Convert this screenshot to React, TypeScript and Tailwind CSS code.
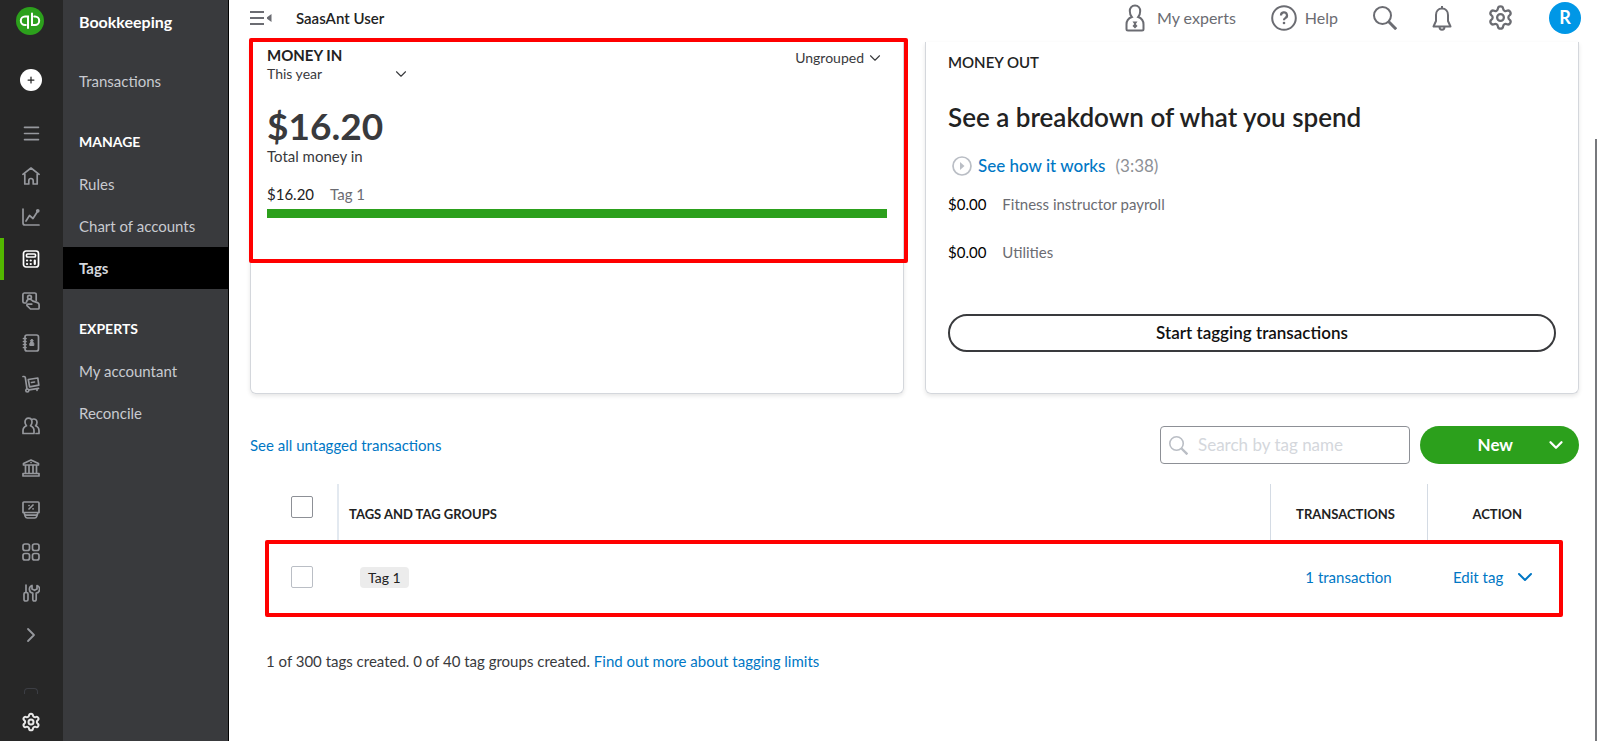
import type { ReactNode } from "react";
import { ChevronDown, ChevronRight, Menu, Plus, Settings } from "lucide-react";

function RailSvg({ children }: { children: ReactNode }) {
  return (
    <svg
      width="18"
      height="18"
      viewBox="0 0 18 18"
      fill="none"
      stroke="currentColor"
      strokeWidth="1.7"
      strokeLinecap="round"
      strokeLinejoin="round"
      aria-hidden="true"
    >
      {children}
    </svg>
  );
}

function SearchGlyph({ size }: { size: number }) {
  return (
    <svg width={size} height={size} viewBox="0 0 24 24" fill="none" stroke="currentColor" strokeWidth="2" className="shrink-0" aria-hidden="true">
      <circle cx="9.5" cy="9.5" r="8.5" />
      <path d="m15.5 15.5 7.7 7.7" strokeWidth="3" />
    </svg>
  );
}

const railItems: { label: string; active?: boolean; icon: ReactNode }[] = [
  { label: "Menu", icon: <Menu size={21} strokeWidth={1.8} /> },
  {
    label: "Home",
    icon: (
      <RailSvg>
        <path d="M.9 7.3 9 1l8.1 6.3M2.8 6v11h4v-3.3a2.2 2.2 0 0 1 4.4 0V17h4V6" />
      </RailSvg>
    ),
  },
  {
    label: "Reports",
    icon: (
      <RailSvg>
        <path d="M1 1v14a2 2 0 0 0 2 2h14M4 13l3.5-5.5 3.5 3 4.5-7" />
        <circle cx="15.8" cy="2.8" r="1" />
      </RailSvg>
    ),
  },
  {
    label: "Bookkeeping",
    active: true,
    icon: (
      <RailSvg>
        <rect x="1.5" y="1" width="15" height="16" rx="2.5" />
        <rect x="4.5" y="4" width="9" height="3" rx="1" />
        <path d="M5 10.5h.1M8.7 10.5h.1M5 14h.1M8.7 14h.1M12.8 10.5V14" strokeWidth="2.2" />
      </RailSvg>
    ),
  },
  {
    label: "Sales",
    icon: (
      <RailSvg>
        <path d="M4 11H2.3A1.5 1.5 0 0 1 .9 9.5v-7A1.5 1.5 0 0 1 2.3 1h10.4a1.5 1.5 0 0 1 1.5 1.5v5.8" />
        <circle cx="7.5" cy="5.3" r="1.9" />
        <path d="M4.5 10c.3-1.7 1.5-2.8 3-2.8 1.4 0 2.3.9 3.5 1.9l4.5 1.5q1.6.7 1.6 2.2v3.2q0 1-1 1H8.5L5 13.7q-.6-1.4 1-1.7l3.8.2" />
      </RailSvg>
    ),
  },
  {
    label: "Contacts",
    icon: (
      <RailSvg>
        <rect x="3" y="1" width="13.5" height="16" rx="2" />
        <path d="M1.5 4.5H4M1.5 7.5H4M1.5 10.5H4M1.5 13.5H4" />
        <path
          d="M9.8 5.5a1.2 1.2 0 0 1 .8 2.2l1.2 1.8v2h-4v-2L9 7.7a1.2 1.2 0 0 1 .8-2.2z"
          fill="currentColor"
          strokeWidth="1"
        />
      </RailSvg>
    ),
  },
  {
    label: "Commerce",
    icon: (
      <RailSvg>
        <path d="M1 1.5h1.2q.9 0 1.1 1L5 14M7 14.8l9.5-1.5" />
        <circle cx="5.3" cy="15.5" r="1.5" />
        <path d="m6.3 4.5 9.5-1.5 1 7.2-9.2 1.6zM9.5 7.500l3-.5M15 14.5v.8" />
      </RailSvg>
    ),
  },
  {
    label: "Customers",
    icon: (
      <RailSvg>
        <path d="M6.5 1.2c2.2 0 3.5 1.6 3.5 3.800 0 1.6-.6 2.8-1.5 3.8 2.3.9 3.5 2.3 3.5 5v2.7H1v-2.7c0-2.7 1.2-4.1 3.5-5C3.600 7.8 3 6.6 3 5c0-2.2 1.3-3.8 3.5-3.8z" />
        <path d="M10.5 2.2c2.8-.8 4.5.8 4.5 3.1 0 1.5-.5 2.6-1.4 3.5 2.2.8 3.4 2.2 3.4 5v2.7h-3" />
      </RailSvg>
    ),
  },
  {
    label: "Banking",
    icon: (
      <RailSvg>
        <path d="M1.500 6V4.5L9 1l7.5 3.5V6zM3.5 6v8M7 6v8M11 6v8M14.5 6v8M1 14.5h16V17H1zM9 3.5h.1" />
      </RailSvg>
    ),
  },
  {
    label: "Taxes",
    icon: (
      <RailSvg>
        <path d="M2 1h14q1 0 1 1v9.5H1V2q0-1 1-1zM2 11.5l1.3 4q.5 1.5 2 1.5h7.4q1.5 0 2-1.5l1.3-4M3.5 14.2h11" />
        <path d="m7 8 4-4M7 4.5h.1M11 7.8h.1" />
      </RailSvg>
    ),
  },
  {
    label: "Apps",
    icon: (
      <RailSvg>
        <rect x="1" y="1" width="6.5" height="6.5" rx="2" />
        <rect x="10.5" y="1" width="6.5" height="6.5" rx="2" />
        <rect x="1" y="10.5" width="6.5" height="6.5" rx="2" />
        <rect x="10.5" y="10.5" width="6.5" height="6.5" rx="2" />
      </RailSvg>
    ),
  },
  {
    label: "Tools",
    icon: (
      <RailSvg>
        <path d="M4 1v7.5" />
        <rect x="2" y="8.5" width="4" height="8.5" rx="1.5" />
        <path d="M10.8 9.2a4 4 0 0 1-.8-7.7V5l2.5 1.3L15 5V1.5a4 4 0 0 1-.8 7.7v6.1a1.7 1.7 0 0 1-3.4 0z" />
      </RailSvg>
    ),
  },
  { label: "More", icon: <ChevronRight size={24} strokeWidth={1.8} /> },
];

function IconRail() {
  return (
    <nav aria-label="Main" className="flex w-[63px] shrink-0 flex-col items-center bg-[#272727] pr-px text-[#96989d]">
      <a href="#home" aria-label="QuickBooks" className="mt-[7px] mr-[3px]">
        <svg width="28" height="28" viewBox="0 0 28 28" fill="none" stroke="#fff" strokeWidth="2" strokeLinecap="round">
          <circle cx="14" cy="14" r="14" fill="#2ca01c" stroke="none" />
          <path d="M12 21V9.5H9a4.200 4.200 0 0 0 0 8.4h.8M16 6.500V18h3a4.200 4.200 0 0 0 0-8.4h-.8" />
        </svg>
      </a>
      <button aria-label="Create" className="mt-[34px] flex size-[22px] items-center justify-center rounded-full bg-white text-[#272727]">
        <Plus size={10} strokeWidth={3} />
      </button>
      <ul className="mt-[22px] flex w-full flex-1 flex-col">
        {railItems.map((item) => (
          <li key={item.label} className="flex flex-1">
            <a
              href="#"
              aria-label={item.label}
              className={
                item.active
                  ? "flex flex-1 items-center justify-center border-l-4 border-[#53b700] pr-1 text-white"
                  : "flex flex-1 items-center justify-center"
              }
            >
              {item.icon}
            </a>
          </li>
        ))}
      </ul>
      <span className="mt-8 h-1.5 w-3.5 rounded-t border border-b-0 border-[#3c3e44]" />
      <button aria-label="Settings" className="mt-[18px] mb-[9px] text-[#e8e8e8]">
        <Settings size={20} strokeWidth={2.4} />
      </button>
    </nav>
  );
}

function NavLink({ children, active }: { children: ReactNode; active?: boolean }) {
  return (
    <a
      href="#"
      aria-current={active ? "page" : undefined}
      className={
        active
          ? "flex h-[42px] items-center bg-black pl-4 text-[15px] font-bold text-[#d4d7dc]"
          : "flex h-[42px] items-center pl-4 text-[15px] text-[#c8cad0]"
      }
    >
      {children}
    </a>
  );
}

function NavHeading({ children }: { children: ReactNode }) {
  return <h3 className="mt-[18px] flex h-[43px] items-center pl-4 text-[14px] font-bold text-white">{children}</h3>;
}

function SideNav() {
  return (
    <nav aria-label="Bookkeeping" className="w-[166px] shrink-0 border-r border-black bg-[#393a3d]">
      <h2 className="flex h-11 items-center pl-4 text-[16px] font-bold text-white">Bookkeeping</h2>
      <div className="pt-4">
        <NavLink>Transactions</NavLink>
      </div>
      <NavHeading>MANAGE</NavHeading>
      <NavLink>Rules</NavLink>
      <NavLink>Chart of accounts</NavLink>
      <NavLink active>Tags</NavLink>
      <NavHeading>EXPERTS</NavHeading>
      <NavLink>My accountant</NavLink>
      <NavLink>Reconcile</NavLink>
    </nav>
  );
}

function Topbar() {
  return (
    <header className="flex h-[42px] items-start justify-between pr-[19px] pl-[21px] text-[#6b6c72]">
      <div className="flex h-9 items-center gap-6">
        <button aria-label="Collapse menu">
          <svg width="22" height="16" viewBox="0 0 22 16" fill="#6b6c72" aria-hidden="true">
            <path d="M0 1h14v2H0zM0 7h14v2H0zM0 13h14v2H0zM21.5 4v8L17 8.7V7.3z" />
          </svg>
        </button>
        <span className="text-[15px] leading-9 font-semibold text-[#222]">SaasAnt User</span>
      </div>
      <div className="flex h-[35px] items-center gap-[35px]">
        <button className="flex items-center gap-3 text-[16px]">
          <svg width="20" height="28" viewBox="0 0 20 28" fill="none" stroke="currentColor" strokeWidth="2" aria-hidden="true">
            <path d="M10 1.500c3.300 0 5.200 2.400 5.200 5.500 0 2.600-.8 4.700-2 6 3.600 1.300 5.300 3.500 5.300 7.500V25q0 1.500-1.500 1.500H3Q1.500 26.500 1.500 25v-4.500c0-4 1.700-6.200 5.300-7.500-1.200-1.300-2-3.400-2-6 0-3.100 1.900-5.500 5.200-5.500z" />
            <path d="M7.5 17.500h5L10.8 20l1.700 2-2.500 2.500L7.500 22l1.700-2z" fill="currentColor" stroke="none" />
          </svg>
          My experts
        </button>
        <button className="flex items-center gap-2 text-[16px]">
          <svg width="26" height="26" viewBox="0 0 26 26" fill="none" stroke="currentColor" strokeWidth="2" aria-hidden="true">
            <circle cx="13" cy="13" r="11.8" />
            <path d="M10 10.5a3 3 0 1 1 4.3 2.6q-1.3.7-1.3 2.2" strokeWidth="2.2" />
            <circle cx="13" cy="18" r="1.3" fill="currentColor" stroke="none" />
          </svg>
          Help
        </button>
        <button aria-label="Search">
          <SearchGlyph size={24} />
        </button>
        <button aria-label="Notifications">
          <svg width="20" height="26" viewBox="0 0 20 26" fill="none" stroke="currentColor" strokeWidth="2" strokeLinejoin="round" aria-hidden="true">
            <path d="M10 1v2.5M10 3.500c-3.700 0-6 2.700-6 6.500v6l-2.500 5.500h17L16 16v-6c0-3.800-2.300-6.500-6-6.500zM7.500 22c0 3.500 5 3.500 5 0" />
          </svg>
        </button>
        <button aria-label="Settings">
          <Settings size={27} strokeWidth={2} />
        </button>
        <button aria-label="Account" className="flex size-8 items-center justify-center rounded-full bg-[#0097e6] text-[18px] font-bold text-white">
          R
        </button>
      </div>
    </header>
  );
}

function MoneyInCard() {
  return (
    <section className="relative rounded-b-md border border-t-0 border-[#d4d7dc] px-4 shadow-[0_2px_4px_rgba(0,0,0,0.1)]">
      <div className="flex items-start justify-between pt-1 text-[14px] text-[#393a3d]">
        <div>
          <h2 className="text-[15px] leading-[18px] font-bold text-[#222]">MONEY IN</h2>
          <button className="flex w-[143px] items-center justify-between leading-5">
            This year
            <ChevronDown size={18} strokeWidth={1.5} />
          </button>
        </div>
        <button className="mr-[3px] flex items-center gap-0.5 leading-6">
          Ungrouped
          <ChevronDown size={18} strokeWidth={1.5} />
        </button>
      </div>
      <p className="mt-[22px] text-[37px] leading-10 font-bold text-[#393a3d]">$16.20</p>
      <p className="text-[15px] leading-5 text-[#393a3d]">Total money in</p>
      <p className="mt-[18px] flex gap-4 text-[15px] leading-5">
        <span className="text-[#222]">$16.20</span>
        <span className="text-[#6b6c72]">Tag 1</span>
      </p>
      <div className="mt-[5px] h-[9px] bg-[#2ca01c]" />
      <span className="pointer-events-none absolute -top-1 -right-[5px] -left-[2px] h-[225px] rounded-xs border-4 border-[#ff0000]" />
    </section>
  );
}

function MoneyOutCard() {
  return (
    <section className="rounded-b-md border border-t-0 border-[#d4d7dc] px-[22px] pb-[41px] shadow-[0_2px_4px_rgba(0,0,0,0.1)]">
      <h2 className="mt-2.5 text-[15px] leading-5 font-semibold text-[#222]">MONEY OUT</h2>
      <p className="mt-7 text-[26px] leading-[34px] font-semibold text-[#222]">See a breakdown of what you spend</p>
      <div className="mt-5 flex items-center pl-1 text-[17px] leading-6">
        <svg width="20" height="20" viewBox="0 0 20 20" fill="none" stroke="#babec5" strokeWidth="1.7" aria-hidden="true">
          <circle cx="10" cy="10" r="9" />
          <path d="M8 6v8l4.500-4z" fill="#babec5" stroke="none" />
        </svg>
        <a href="#how" className="ml-1.5 font-medium text-[#0077c5]">See how it works</a>
        <span className="ml-2.5 text-[#8d9096]">(3:38)</span>
      </div>
      <div className="mt-4 flex gap-4 text-[15px] leading-5">
        <span className="text-black">$0.00</span>
        <span className="text-[#6b6c72]">Fitness instructor payroll</span>
      </div>
      <div className="mt-7 flex gap-4 text-[15px] leading-5">
        <span className="text-black">$0.00</span>
        <span className="text-[#6b6c72]">Utilities</span>
      </div>
      <button className="mt-[52px] h-[38px] w-full rounded-full border-2 border-[#393a3d] text-[17px] font-semibold text-[#111]">
        Start tagging transactions
      </button>
    </section>
  );
}

function TagTable() {
  return (
    <div className="relative mx-4 mt-5">
      <table className="w-full border-collapse text-[15px]">
        <thead className="text-[13px] text-[#222]">
          <tr className="h-[57px]">
            <th className="w-[72px] border-r-2 border-[#e3e9f0] pb-3 pl-[25px] text-left">
              <input type="checkbox" aria-label="Select all tags" className="block size-[22px] appearance-none rounded-xs border border-[#8d9096]" />
            </th>
            <th className="pt-1 pl-2.5 text-left font-bold">TAGS AND TAG GROUPS</th>
            <th className="w-[157px] border-x border-[#d4dbe4] pt-1 pr-1.5 text-center font-bold">TRANSACTIONS</th>
            <th className="w-[136px] pt-1 pl-1 text-center font-bold">ACTION</th>
          </tr>
        </thead>
        <tbody>
          <tr className="h-[76px]">
            <td className="pb-1 pl-[25px]">
              <input type="checkbox" aria-label="Select Tag 1" className="block size-[22px] appearance-none rounded-xs border border-[#babec5]" />
            </td>
            <td className="pb-1 pl-[22px]">
              <span className="rounded bg-[#ececec] px-2 py-[2px] text-[14px] text-[#222]">Tag 1</span>
            </td>
            <td className="pb-1 text-center">
              <a href="#transactions" className="text-[#0077c5]">1 transaction</a>
            </td>
            <td className="pb-1">
              <button className="ml-[26px] flex items-center gap-2.5 text-[#0077c5]">
                Edit tag
                <ChevronDown size={24} strokeWidth={2} />
              </button>
            </td>
          </tr>
        </tbody>
      </table>
      <span className="pointer-events-none absolute right-0 bottom-0 -left-px h-[77px] rounded-xs border-4 border-[#ff0000]" />
    </div>
  );
}

export default function App() {
  return (
    <div className="flex h-screen overflow-hidden bg-white font-['Lato','Liberation_Sans',sans-serif]">
      <IconRail />
      <SideNav />
      <div className="flex min-w-0 flex-1 flex-col">
        <Topbar />
        <div className="flex min-h-0 flex-1">
          <main className="min-w-0 flex-1 pl-[21px]">
            <div className="grid grid-cols-2 gap-[21px]">
              <MoneyInCard />
              <MoneyOutCard />
            </div>
            <div className="mt-8 flex items-center justify-between">
              <a href="#untagged" className="text-[15px] text-[#0077c5]">See all untagged transactions</a>
              <div className="flex gap-2.5">
                <label className="flex h-[38px] w-[250px] items-center gap-2.5 rounded border border-[#8d9096] px-2 text-[#babec5]">
                  <SearchGlyph size={19} />
                  <input
                    type="text"
                    aria-label="Search by tag name"
                    placeholder="Search by tag name"
                    className="w-full min-w-0 text-[17px] text-[#393a3d] outline-none placeholder:text-[#d4d7dc]"
                  />
                </label>
                <button className="flex h-[38px] w-[159px] items-center justify-end gap-8 rounded-full bg-[#2ca01c] pr-3 text-[17px] font-bold text-white">
                  New
                  <ChevronDown size={22} strokeWidth={2.5} />
                </button>
              </div>
            </div>
            <TagTable />
            <p className="mt-[34px] ml-4 text-[15px] leading-5 text-[#393a3d]">
              1 of 300 tags created. 0 of 40 tag groups created.{" "}
              <a href="#limits" className="text-[#0077c5]">Find out more about tagging limits</a>
            </p>
          </main>
          <div className="w-[21px] shrink-0 pt-[97px] pl-4">
            <div className="h-full w-[2px] bg-[#77787c]" />
          </div>
        </div>
      </div>
    </div>
  );
}
